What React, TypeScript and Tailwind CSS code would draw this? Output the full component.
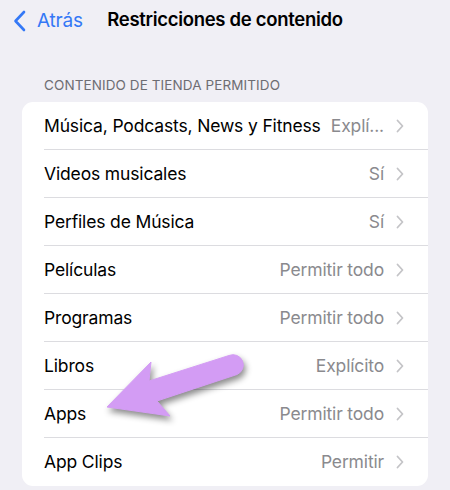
import React from 'react';

const rows = [
  { label: 'Música, Podcasts, News y Fitness', value: 'Explí...' },
  { label: 'Videos musicales', value: 'Sí' },
  { label: 'Perfiles de Música', value: 'Sí' },
  { label: 'Películas', value: 'Permitir todo' },
  { label: 'Programas', value: 'Permitir todo' },
  { label: 'Libros', value: 'Explícito' },
  { label: 'Apps', value: 'Permitir todo' },
  { label: 'App Clips', value: 'Permitir' },
];

function Chevron() {
  return (
    <svg width="8" height="14" viewBox="0 0 8 14" className="shrink-0">
      <path d="M1.5 1.5 L6.5 7 L1.5 12.5" fill="none" stroke="#c4c4c7" strokeWidth="1.8" strokeLinecap="round" strokeLinejoin="round" />
    </svg>
  );
}

export default function App() {
  return (
    <div className="relative w-[450px] h-[490px] overflow-hidden bg-[#f0eff5] font-['Inter','Liberation_Sans',sans-serif]">
      {/* Nav bar */}
      <div className="relative h-[38px] flex items-center">
        <div className="absolute left-[13px] top-[7px] flex items-center gap-[11px]">
          <svg width="13" height="22" viewBox="0 0 13 22">
            <path d="M11 2 L2.5 11 L11 20" fill="none" stroke="#3478f6" strokeWidth="2.6" strokeLinecap="round" strokeLinejoin="round" />
          </svg>
          <span className="text-[19px] text-[#3478f6] tracking-[-0.2px]">Atrás</span>
        </div>
        <div className="w-full pt-px text-center text-[18.5px] font-semibold text-black tracking-[-0.3px]">
          Restricciones de contenido
        </div>
      </div>

      {/* Section header */}
      <div className="pl-[44px] pt-[37px] pb-[7px] text-[13.5px] text-[#6d6d72] tracking-[0.1px]">
        CONTENIDO DE TIENDA PERMITIDO
      </div>

      {/* Card */}
      <div className="mx-[22px] bg-white rounded-[11px] overflow-hidden">
        {rows.map((row, i) => (
          <div key={i} className="pl-[22px]">
            <div className={`h-[48px] flex items-center pr-[24px] ${i < rows.length - 1 ? 'border-b border-[#dcdce0]' : ''}`}>
              <span className="text-[17.5px] text-black tracking-[-0.15px] whitespace-nowrap">{row.label}</span>
              <span className="ml-auto pl-2 text-[17.5px] text-[#8a8a8e] tracking-[-0.15px] whitespace-nowrap">{row.value}</span>
              <span className="ml-[12px]"><Chevron /></span>
            </div>
          </div>
        ))}
      </div>

      {/* Annotation arrow */}
      <svg className="absolute left-0 top-0 pointer-events-none" width="450" height="490" style={{ filter: 'drop-shadow(2px 4px 3px rgba(0,0,0,0.45))' }}>
        <path
          d="M107 407 L151 362 L149 381 L229 355.5 A9.7 9.7 0 0 1 237 374.5 L157 401 L170 416 Z"
          fill="#d39cf4"
          stroke="#d39cf4"
          strokeWidth="1"
          strokeLinejoin="round"
        />
      </svg>
    </div>
  );
}
